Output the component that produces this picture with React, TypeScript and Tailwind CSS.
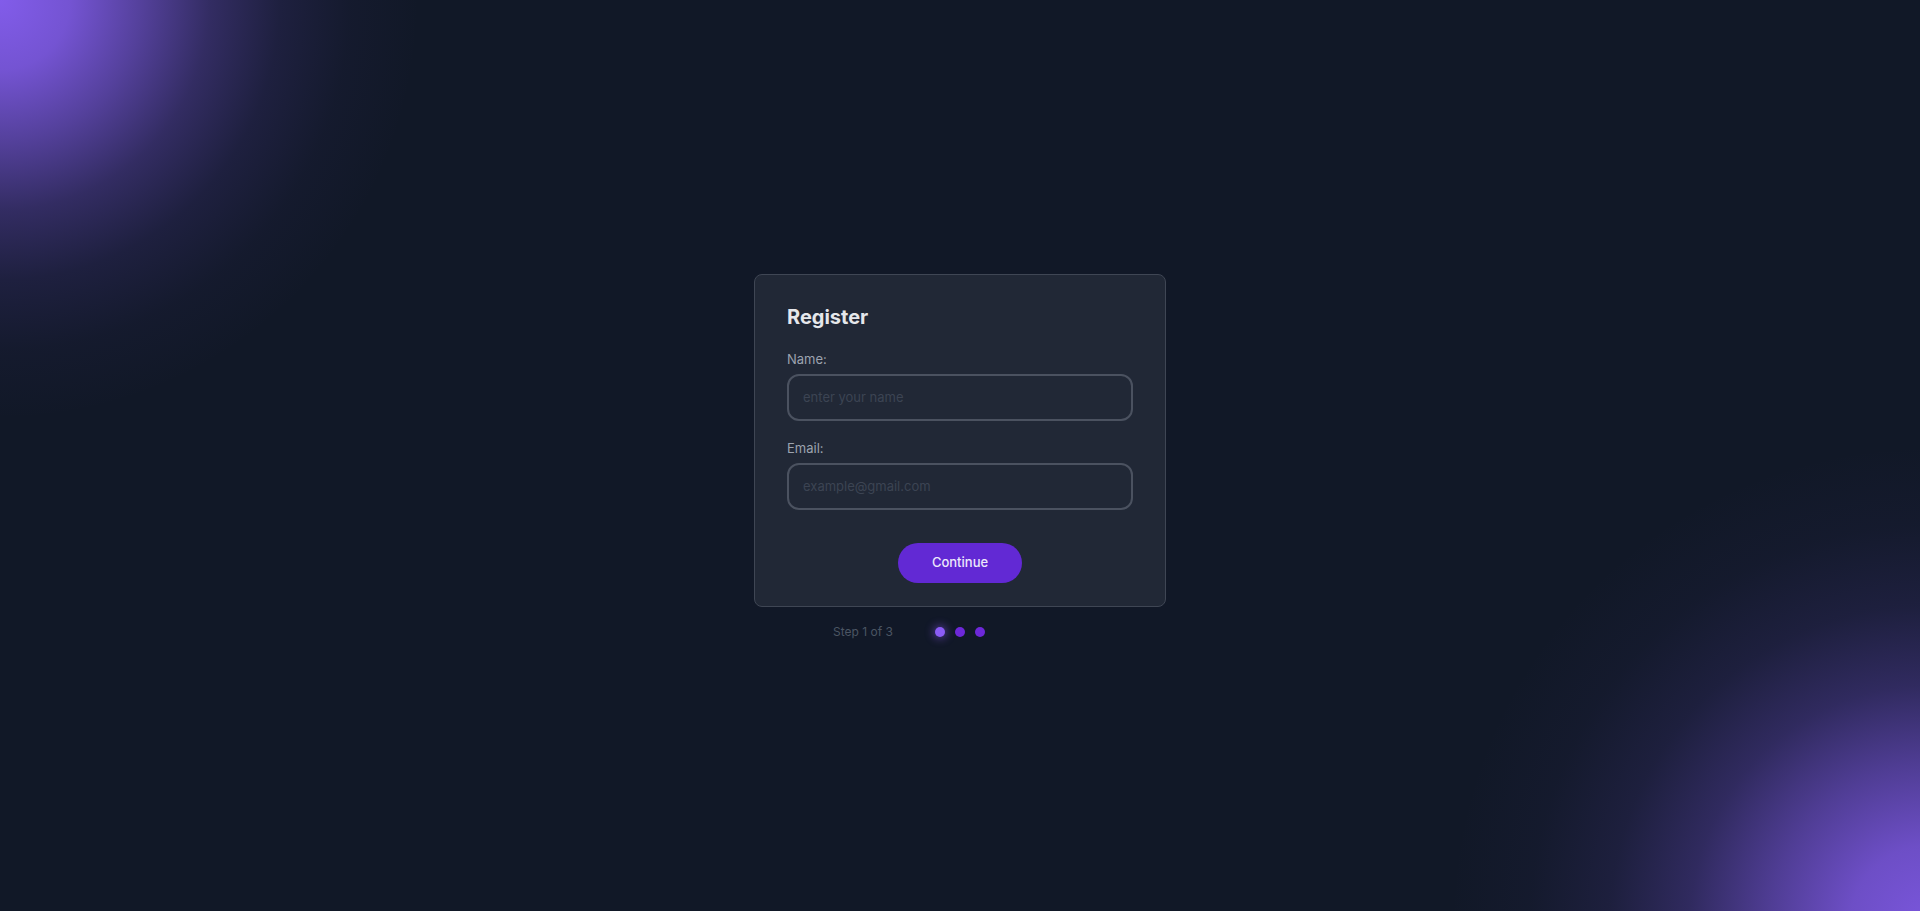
export default function App() {
  return (
    <div className="min-h-screen w-full flex flex-col items-center justify-center bg-[#111827] bg-[radial-gradient(circle_at_0px_0px,rgba(130,92,234,1)_0px,rgba(130,92,234,0.88)_70px,rgba(126,90,228,0.62)_140px,rgba(120,86,220,0.33)_210px,rgba(110,80,210,0.14)_280px,rgba(110,80,210,0.04)_350px,rgba(17,24,39,0)_420px),radial-gradient(circle_at_1930px_925px,rgba(122,86,220,1)_0px,rgba(122,86,220,0.88)_80px,rgba(118,84,216,0.62)_160px,rgba(112,80,210,0.33)_240px,rgba(105,76,200,0.14)_320px,rgba(105,76,200,0.04)_400px,rgba(17,24,39,0)_480px)] font-['Inter',sans-serif]">
      <div className="w-[412px] mt-1 rounded-lg border border-[#3f4654] bg-[#212836] pt-[28px] pb-[23px] px-8">
        <h1 className="text-xl font-bold text-[#e5e7eb] leading-7 mb-[18px]">Register</h1>
        <div className="flex flex-col gap-[17px]">
          <div>
            <label className="block text-[13px] leading-5 text-[#9ca3af] mb-[5px]">Name:</label>
            <input
              type="text"
              placeholder="enter your name"
              className="w-full h-[47px] rounded-xl border-2 border-[#4b5260] bg-transparent px-[14px] text-[13px] text-gray-200 placeholder:text-[#3c4453] outline-none"
            />
          </div>
          <div>
            <label className="block text-[13px] leading-5 text-[#9ca3af] mb-[5px]">Email:</label>
            <input
              type="email"
              placeholder="example@gmail.com"
              className="w-full h-[47px] rounded-xl border-2 border-[#4b5260] bg-transparent px-[14px] text-[13px] text-gray-200 placeholder:text-[#3c4453] outline-none"
            />
          </div>
        </div>
        <div className="flex justify-center mt-[33px]">
          <button className="w-[124px] h-[40px] rounded-full bg-[#6229d4] text-[13px] font-medium text-[#ece8fb]">
            Continue
          </button>
        </div>
      </div>
      <div className="w-[412px] grid grid-cols-[1fr_auto_1fr] items-center mt-[15px] h-5">
        <span className="justify-self-end pr-[42px] text-[12px] text-[#4b5563]">Step 1 of 3</span>
        <div className="flex items-center gap-[10px]">
          <span className="w-[10px] h-[10px] rounded-full bg-[#8b5cf6] shadow-[0_0_8px_2px_rgba(139,92,246,0.45)]"></span>
          <span className="w-[10px] h-[10px] rounded-full bg-[#6d28d9]"></span>
          <span className="w-[10px] h-[10px] rounded-full bg-[#6d28d9]"></span>
        </div>
        <span></span>
      </div>
    </div>
  );
}
